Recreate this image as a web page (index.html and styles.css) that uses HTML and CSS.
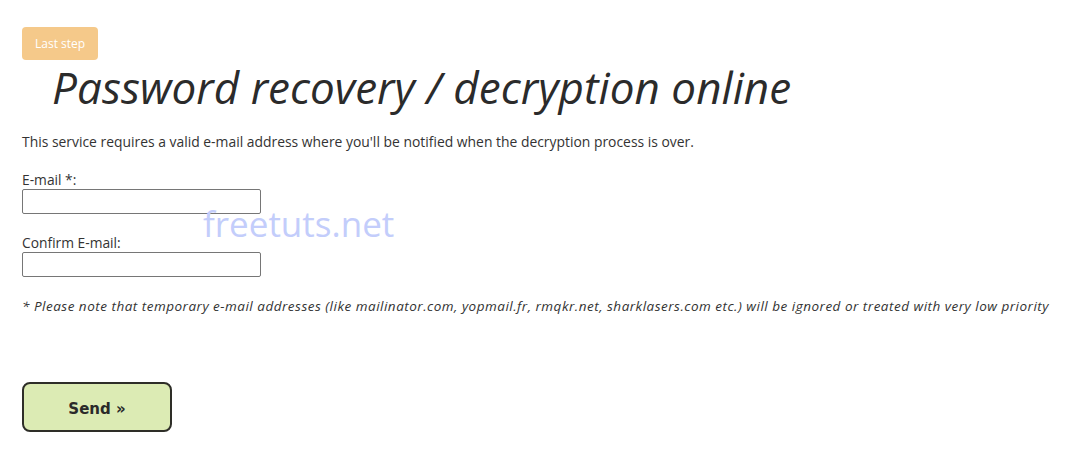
FILE: index.html
```html
<!DOCTYPE html>
<html>
<head>
<meta charset="utf-8">
<link rel="stylesheet" href="styles.css">
</head>
<body>
<div class="page">
  <div class="top"><span class="last-step">Last step</span></div>
  <h1 class="title">Password recovery / decryption online</h1>
  <p class="intro">This service requires a valid e-mail address where you'll be notified when the decryption process is over.</p>
  <form class="form">
    <div class="field">
      <label class="label">E-mail *:</label>
      <input class="input" type="text">
    </div>
    <div class="field">
      <label class="label">Confirm E-mail:</label>
      <input class="input" type="text">
    </div>
    <span class="watermark">freetuts.net</span>
    <p class="note">* Please note that temporary e-mail addresses (like mailinator.com, yopmail.fr, rmqkr.net, sharklasers.com etc.) will be ignored or treated with very low priority</p>
    <button class="send" type="button">Send »</button>
  </form>
</div>
</body>
</html>
```
FILE: styles.css
```css
html, body {
  margin: 0;
  padding: 0;
  background: #ffffff;
}
.page {
  padding: 27px 22px 0 22px;
  font-family: "Open Sans", "Liberation Sans", sans-serif;
  color: #333333;
  position: relative;
}
.top {
  display: flex;
}
.last-step {
  display: inline-block;
  background: #f5c98a;
  color: #ffffff;
  font-size: 12px;
  line-height: 33px;
  height: 33px;
  padding: 0 13px;
  border-radius: 4px;
}
.title {
  margin: 3px 0 0 30px;
  font-size: 44px;
  font-style: italic;
  font-weight: normal;
  line-height: 48px;
  color: #2b2b2b;
  letter-spacing: 0.05px;
  white-space: nowrap;
}
.intro {
  margin: 22px 0 0 0;
  font-size: 13.9px;
  line-height: 18px;
}
.form {
  margin: 20px 0 0 0;
  position: relative;
}
.field {
  display: flex;
  flex-direction: column;
  margin-bottom: 20px;
}
.field + .field {
  margin-bottom: 0;
}
.label {
  font-size: 13.8px;
  line-height: 18px;
}
.input {
  width: 239px;
  height: 25px;
  box-sizing: border-box;
  margin: 0;
  border: 1px solid #767676;
  border-radius: 2px;
}
.watermark {
  position: absolute;
  left: 181px;
  top: 29px;
  font-family: "Open Sans", sans-serif;
  font-size: 35px;
  color: #c3cdfb;
  pointer-events: none;
}
.note {
  margin: 20px 0 0 0;
  font-size: 13.5px;
  line-height: 18px;
  font-style: italic;
  letter-spacing: 0.5px;
  white-space: nowrap;
}
.send {
  margin-top: 67px;
  width: 150px;
  height: 50px;
  padding: 3px 0 0 0;
  background: #dcebb4;
  border: 2px solid #2e2e28;
  border-radius: 8px;
  font-family: "DejaVu Sans", Verdana, sans-serif;
  font-weight: bold;
  font-size: 15px;
  color: #2a2a2a;
}
```
